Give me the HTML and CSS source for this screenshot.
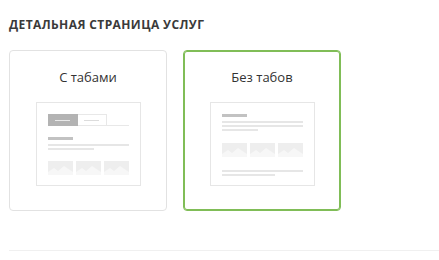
FILE: index.html
```html
<!DOCTYPE html>
<html lang="ru">
<head>
<meta charset="utf-8">
<link rel="stylesheet" href="styles.css">
</head>
<body>
<div class="page">
  <h2 class="heading">Детальная страница услуг</h2>
  <div class="cards">
    <div class="card">
      <div class="card-title">С табами</div>
      <div class="mock">
        <div class="tabs">
          <div class="tab tab-active"><span class="tab-line"></span></div>
          <div class="tab tab-idle"><span class="tab-line"></span></div>
          <div class="tab-rest"></div>
        </div>
        <div class="bar bar-head mt-11"></div>
        <div class="bar bar-line mt-4 w-full"></div>
        <div class="bar bar-line mt-2 w-46"></div>
        <div class="pics mt-11">
          <div class="pic"><svg viewBox="0 0 25 14" width="25" height="14"><path d="M0 14 L0 11 L6 7 L10 10 L16 5 L25 11 L25 14 Z" fill="#f7f7f7"/></svg></div>
          <div class="pic"><svg viewBox="0 0 25 14" width="25" height="14"><path d="M0 14 L0 11 L6 7 L10 10 L16 5 L25 11 L25 14 Z" fill="#f7f7f7"/></svg></div>
          <div class="pic"><svg viewBox="0 0 25 14" width="25" height="14"><path d="M0 14 L0 11 L6 7 L10 10 L16 5 L25 11 L25 14 Z" fill="#f7f7f7"/></svg></div>
        </div>
      </div>
    </div>
    <div class="card card-selected">
      <div class="card-title">Без табов</div>
      <div class="mock">
        <div class="bar bar-head"></div>
        <div class="bar bar-line mt-4 w-full"></div>
        <div class="bar bar-line mt-2 w-full"></div>
        <div class="bar bar-line mt-2 w-36"></div>
        <div class="pics mt-12">
          <div class="pic"><svg viewBox="0 0 25 14" width="25" height="14"><path d="M0 14 L0 11 L6 7 L10 10 L16 5 L25 11 L25 14 Z" fill="#f7f7f7"/></svg></div>
          <div class="pic"><svg viewBox="0 0 25 14" width="25" height="14"><path d="M0 14 L0 11 L6 7 L10 10 L16 5 L25 11 L25 14 Z" fill="#f7f7f7"/></svg></div>
          <div class="pic"><svg viewBox="0 0 25 14" width="25" height="14"><path d="M0 14 L0 11 L6 7 L10 10 L16 5 L25 11 L25 14 Z" fill="#f7f7f7"/></svg></div>
        </div>
        <div class="bar bar-line mt-13 w-full"></div>
        <div class="bar bar-line mt-2 w-53"></div>
      </div>
    </div>
  </div>
  <div class="separator"></div>
</div>
</body>
</html>
```

FILE: styles.css
```css
* { box-sizing: border-box; }
html, body { margin: 0; padding: 0; background: #fff; }
body { font-family: "Open Sans", "Noto Sans", sans-serif; color: #333; }
.page { padding: 17px 0 0 9px; width: 439px; height: 260px; overflow: hidden; }
.heading {
  margin: 0;
  font-size: 12px;
  line-height: 16px;
  font-weight: 700;
  text-transform: uppercase;
  letter-spacing: 0.4px;
  color: #3a3a3a;
}
.cards { display: flex; gap: 16px; margin-top: 17px; }
.card {
  width: 158px;
  height: 161px;
  border: 1px solid #e2e2e2;
  border-radius: 4px;
  display: flex;
  flex-direction: column;
  align-items: center;
  padding-top: 16px;
}
.card-selected {
  border-color: #80bd57;
  box-shadow: inset 0 0 0 1px #80bd57;
}
.card-title { font-size: 13px; line-height: 20px; color: #333; }
.mock {
  margin-top: 15px;
  width: 105px;
  height: 84px;
  border: 1px solid #e6e6e6;
  padding: 11px 11px 0 11px;
  display: flex;
  flex-direction: column;
}
.tabs { display: flex; height: 12px; }
.tab { width: 30px; height: 12px; display: flex; align-items: center; justify-content: center; }
.tab-active { background: #b3b3b3; }
.tab-idle { width: 29px; border: 1px solid #e8e8e8; border-left: 0; }
.tab-active .tab-line { display: block; width: 15px; height: 1px; background: #e9e9e9; }
.tab-idle .tab-line { display: block; width: 15px; height: 1px; background: #dcdcdc; }
.tab-rest { flex: 1; border-bottom: 1px solid #e8e8e8; }
.bar { height: 2px; }
.bar-head { width: 25px; height: 3px; background: #c2c2c2; }
.bar-line { background: #e6e6e6; }
.w-full { width: 81px; }
.w-46 { width: 46px; }
.w-36 { width: 36px; }
.w-53 { width: 53px; }
.mt-2 { margin-top: 2px; }
.mt-4 { margin-top: 4px; }
.mt-11 { margin-top: 11px; }
.mt-12 { margin-top: 12px; }
.mt-13 { margin-top: 13px; }
.pics { display: flex; gap: 3px; }
.pic { width: 25px; height: 14px; background: #eeeeee; }
.pic svg { display: block; }
.separator { margin-top: 39px; height: 1px; background: #f0f0f0; width: 430px; }
```
